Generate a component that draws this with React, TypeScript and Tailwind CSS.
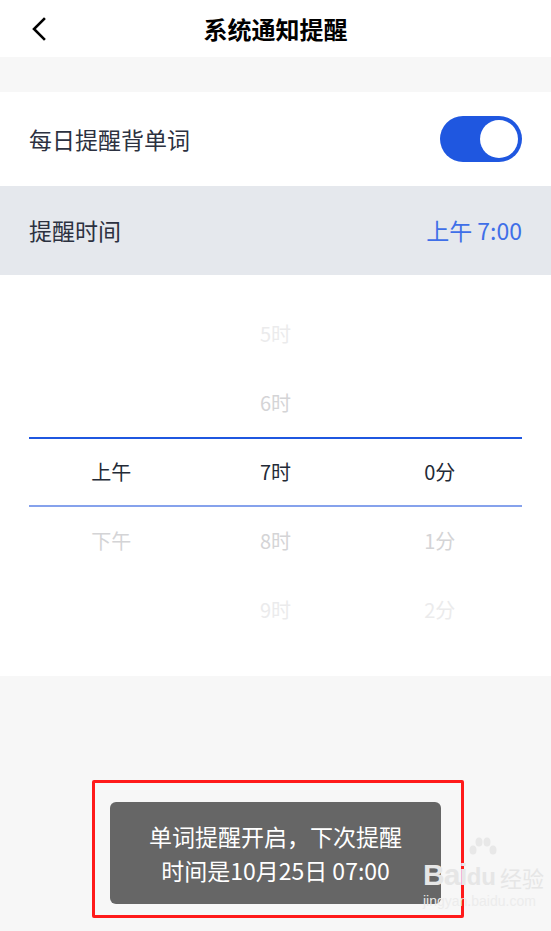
const font = { fontFamily: '"Noto Sans CJK SC", "Noto Sans", Roboto, sans-serif' };

type Cell = { text: string; tone: "on" | "near" | "far" | "none" };

const rows: Cell[][] = [
  [
    { text: "", tone: "none" },
    { text: "5时", tone: "far" },
    { text: "", tone: "none" },
  ],
  [
    { text: "", tone: "none" },
    { text: "6时", tone: "near" },
    { text: "", tone: "none" },
  ],
  [
    { text: "上午", tone: "on" },
    { text: "7时", tone: "on" },
    { text: "0分", tone: "on" },
  ],
  [
    { text: "下午", tone: "near" },
    { text: "8时", tone: "near" },
    { text: "1分", tone: "near" },
  ],
  [
    { text: "", tone: "none" },
    { text: "9时", tone: "far" },
    { text: "2分", tone: "far" },
  ],
];

const toneClass = {
  on: "text-[#232a36]",
  near: "text-[#d4d4d6]",
  far: "text-[#ebebec]",
  none: "",
};

function PickerRow({ row, h }: { row: Cell[]; h: string }) {
  return (
    <div className={"grid grid-cols-3 items-center text-center text-[20px] " + h}>
      {row.map((c, j) => (
        <span key={j} className={toneClass[c.tone]}>
          {c.text}
        </span>
      ))}
    </div>
  );
}

export default function App() {
  return (
    <div className="w-[551px] h-[931px] bg-[#f7f7f7] flex flex-col relative overflow-hidden" style={font}>
      {/* header */}
      <header className="h-[57px] bg-white grid grid-cols-[1fr_auto_1fr] items-center">
        <div className="pl-[31px] flex items-center">
          <svg width="16" height="24" viewBox="0 0 16 24" fill="none" stroke="#000" strokeWidth="2.6" strokeLinecap="square">
            <path d="M13 2 3 12l10 10" />
          </svg>
        </div>
        <h1 className="text-[24px] font-bold text-black">系统通知提醒</h1>
        <div />
      </header>

      <div className="h-[35px]" />

      {/* daily switch */}
      <div className="h-[94px] bg-white px-[29px] flex items-center justify-between">
        <span className="text-[23px] text-[#2c3140]">每日提醒背单词</span>
        <div className="w-[82px] h-[46px] rounded-full bg-[#1f57e0] flex items-center justify-end pr-[4px]">
          <div className="size-[38px] rounded-full bg-white" />
        </div>
      </div>

      {/* time row */}
      <div className="h-[89px] bg-[#e5e8ed] px-[29px] flex items-center justify-between">
        <span className="text-[23px] text-[#2c3140]">提醒时间</span>
        <span className="text-[23px] text-[#3f6fe8]">上午 7:00</span>
      </div>

      {/* picker */}
      <div className="h-[401px] bg-white pt-[24px] px-[29px]">
        <PickerRow row={rows[0]} h="h-[69px]" />
        <PickerRow row={rows[1]} h="h-[69px]" />
        <div className="h-[1.5px] bg-[#1f57e0]" />
        <PickerRow row={rows[2]} h="h-[66px]" />
        <div className="h-[2px] bg-[#86a2ec]" />
        <PickerRow row={rows[3]} h="h-[69px]" />
        <PickerRow row={rows[4]} h="h-[69px]" />
      </div>

      {/* toast */}
      <div className="pt-[104px] pl-[92px]">
        <div className="w-[372px] h-[138px] border-[3px] border-[#ff1a1a] rounded-[2px] pl-[15px] pt-[19px]">
          <div className="w-[331px] h-[102px] rounded-[6px] bg-[#666666] flex flex-col items-center justify-center text-white text-[23px] leading-[34px]">
            <span>单词提醒开启，下次提醒</span>
            <span>时间是10月25日 07:00</span>
          </div>
        </div>
      </div>

      {/* watermark */}
      <div className="absolute left-[423px] top-[858px] flex flex-col items-start text-[#e6e6e6] select-none">
        <div className="flex items-end">
          <span className="text-[30px] font-bold leading-[34px] tracking-[-1px]" style={{ fontFamily: '"Liberation Sans", sans-serif' }}>
            Bai
          </span>
          <span className="relative text-[24px] font-bold leading-[30px]" style={{ fontFamily: '"Liberation Sans", sans-serif' }}>
            du
            <svg className="absolute -top-[26px] left-0" width="30" height="28" viewBox="0 0 30 28" fill="#e8e8e8">
              <ellipse cx="6" cy="14" rx="3.5" ry="4.5" />
              <ellipse cx="12" cy="6" rx="3.5" ry="4.5" />
              <ellipse cx="20" cy="6" rx="3.5" ry="4.5" />
              <ellipse cx="26" cy="14" rx="3.5" ry="4.5" />
            </svg>
          </span>
          <span className="text-[22px] leading-[30px] ml-[4px]">经验</span>
        </div>
        <span className="text-[14px] leading-[18px] text-[#ececec]" style={{ fontFamily: '"Liberation Sans", sans-serif' }}>
          jingyan.baidu.com
        </span>
      </div>
    </div>
  );
}
